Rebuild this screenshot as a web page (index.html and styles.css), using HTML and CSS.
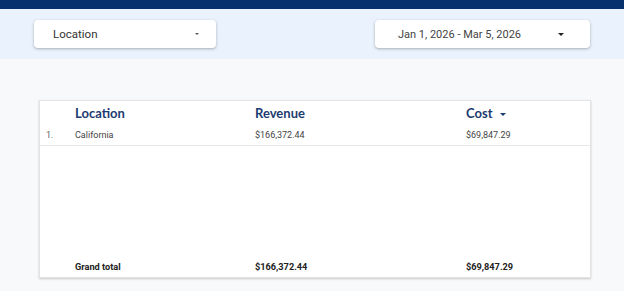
FILE: index.html
```html
<!DOCTYPE html>
<html lang="en">
<head>
<meta charset="UTF-8">
<meta name="viewport" content="width=device-width, initial-scale=1.0">
<title>Location Report</title>
<link rel="stylesheet" href="styles.css">
</head>
<body>

<div class="topbar"></div>

<div class="filters">
  <div class="dropdown location-filter">
    <span class="dropdown-label">Location</span>
    <span class="caret small"></span>
  </div>
  <div class="dropdown date-filter">
    <span class="dropdown-label">Jan 1, 2026 - Mar 5, 2026</span>
    <span class="caret"></span>
  </div>
</div>

<div class="content">
  <div class="card">
    <div class="row head">
      <div class="cell"></div>
      <div class="cell">Location</div>
      <div class="cell">Revenue</div>
      <div class="cell">Cost <span class="caret sort"></span></div>
    </div>
    <div class="row data">
      <div class="cell num">1.</div>
      <div class="cell">California</div>
      <div class="cell">$166,372.44</div>
      <div class="cell">$69,847.29</div>
    </div>
    <div class="spacer"></div>
    <div class="row total">
      <div class="cell"></div>
      <div class="cell">Grand total</div>
      <div class="cell">$166,372.44</div>
      <div class="cell">$69,847.29</div>
    </div>
  </div>
</div>

</body>
</html>
```

FILE: styles.css
```css
body {
  margin: 0;
  font-family: Roboto, "Liberation Sans", sans-serif;
  background-color: #f8f9fb;
  height: 291px;
  overflow: hidden;
}
.topbar {
  height: 9px;
  background-color: #06316c;
}
.filters {
  display: flex;
  height: 50px;
  box-sizing: border-box;
  padding: 11px 34px 0 34px;
  background-color: #eaf3fd;
}
.dropdown {
  display: flex;
  align-items: center;
  height: 28px;
  box-sizing: border-box;
  background-color: #fff;
  border-radius: 4px;
  box-shadow: 0 1px 3px rgba(0, 0, 0, 0.3);
  color: #333;
  font-size: 11.5px;
}
.location-filter {
  width: 182px;
  padding: 0 17px 0 19px;
}
.date-filter {
  width: 215px;
  margin-left: auto;
  padding: 0 26px 0 23px;
  color: #444;
  font-size: 11px;
}
.dropdown-label {
  flex: 1;
}
.caret {
  display: inline-block;
  width: 0;
  height: 0;
  border-left: 3px solid transparent;
  border-right: 3px solid transparent;
  border-top: 3px solid #222;
}
.caret.small {
  border-left-width: 2.5px;
  border-right-width: 2.5px;
  border-top-width: 2.5px;
  border-top-color: #555;
}
.content {
  padding: 41px 33px 0 39px;
}
.card {
  display: flex;
  flex-direction: column;
  height: 178px;
  box-sizing: border-box;
  background-color: #fff;
  border: 1px solid #e4e4e4;
  box-shadow: 0 1px 2px rgba(0, 0, 0, 0.2);
}
.row {
  display: grid;
  grid-template-columns: 35px 180px 211px 1fr;
  align-items: center;
}
.head {
  height: 24px;
  font-family: Lato, "Open Sans", sans-serif;
  font-weight: 700;
  font-size: 13px;
  color: #1c3b70;
}
.sort {
  margin-left: 4px;
  vertical-align: middle;
  border-top-color: #1c3b70;
}
.data {
  height: 20px;
  font-size: 9px;
  color: #444;
  border-bottom: 1px solid #e8e8e8;
}
.num {
  padding-left: 6px;
  color: #666;
}
.spacer {
  flex: 1;
}
.total {
  height: 22px;
  font-size: 9.2px;
  font-weight: 700;
  color: #222;
}
```
